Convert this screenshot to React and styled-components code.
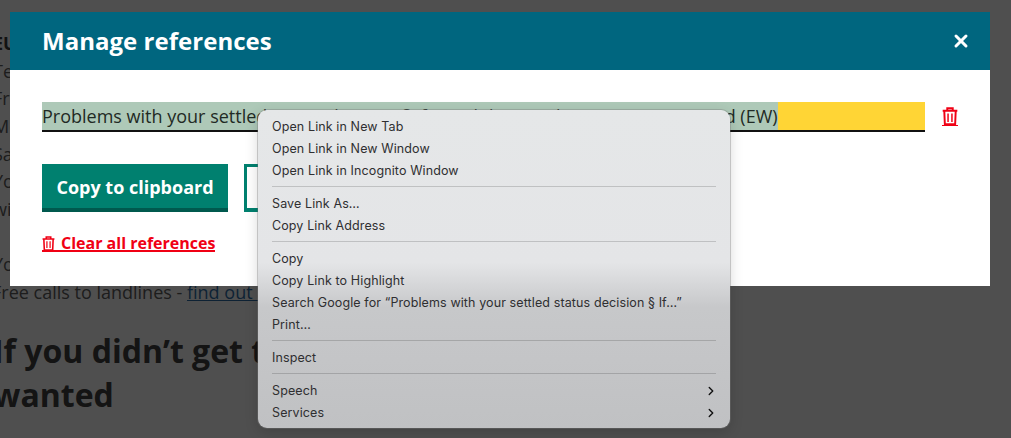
import React from "react";
import styled, { createGlobalStyle } from "styled-components";
import { ChevronRight, X } from "lucide-react";

const Global = createGlobalStyle`
  html, body { margin: 0; padding: 0; width: 1011px; height: 438px; overflow: hidden; background: #fff; }
  * { box-sizing: border-box; }
`;

const Page = styled.div`
  width: 1011px; height: 438px; overflow: hidden; position: relative;
  font-family: "Open Sans", sans-serif; background: #fff;
`;
const Article = styled.main`
  margin-top: -25px;
  font-size: 18px; line-height: 27.6px; color: #5e5e5e;
`;
const Para = styled.p`
  margin: 0 0 ${p => p.$gap || 0}px ${p => p.$indent || -7}px; white-space: nowrap;
`;
const Strong = styled.strong`font-weight: 700; color: #3c3c3c;`;
const PageLink = styled.a`color: #2f6fa8; text-decoration: underline;`;
const Heading = styled.h2`
  margin: 23px 0 0 -7px; font-size: 32px; line-height: 44px; font-weight: 700; color: #404040; white-space: nowrap;
`;
const Scrim = styled.div`
  position: absolute; inset: 0; background: rgba(0,0,0,.69);
`;
const Modal = styled.section`
  position: absolute; left: 10px; top: 12px; width: 980px; height: 274px; background: #fff;
  display: flex; flex-direction: column;
`;
const ModalHeader = styled.header`
  height: 58px; flex: none; background: #00667f; color: #fff;
  display: flex; align-items: center; justify-content: space-between;
  padding: 0 19px 0 32px;
`;
const ModalTitle = styled.h1`
  margin: 0; font-size: 24px; line-height: 32px; font-weight: 700; letter-spacing: .03px;
`;
const CloseIcon = styled(X)`display: block;`;
const ModalBody = styled.div`
  padding: 32px 32px 0; display: flex; flex-direction: column;
`;
const RefRow = styled.div`display: flex; align-items: flex-start; gap: 17px;`;
const RefField = styled.div`
  width: 883px; height: 30px; background: #ffd535; border-bottom: 2px solid #111; display: flex;
  font-size: 18px; line-height: 28px; color: #1f2a24; white-space: nowrap;
`;
const RefSelected = styled.span`
  width: 736px; background: #aec9b8; overflow: hidden; flex: none; height: 28px;
`;
const DeleteLink = styled.a`
  color: #f00014; display: block; height: 20px; margin-top: 4px; border-bottom: 1px solid #f00014; width: 16px;
  line-height: 0; padding-top: 1px;
`;
const Buttons = styled.div`display: flex; gap: 16px; margin-top: 32px;`;
const Primary = styled.button`
  width: 186px; height: 48px; border: 0; border-bottom: 4px solid #00594e; background: #00806f; color: #fff;
  font: 700 18px/24px "Open Sans", sans-serif; padding: 2px 0 0;
`;
const Secondary = styled.button`
  width: 186px; height: 48px; border: 3px solid #00806f; border-bottom-width: 4px; background: #fff; color: #00806f;
  font: 700 18px/24px "Open Sans", sans-serif; padding: 2px 0 0;
`;
const ClearLink = styled.a`
  margin-top: 22px; align-self: flex-start; color: #f00014; font-size: 16px; line-height: 14px; font-weight: 700;
  display: inline-flex; align-items: center; gap: 6px; white-space: nowrap;
  padding-top: 2px; border-bottom: 2px solid #f00014; height: 18px;
`;
const Menu = styled.nav`
  position: absolute; left: 258px; top: 110px; width: 472px; height: 318px; border-radius: 9px;
  padding: 5px 0;
  background: linear-gradient(180deg, #e5e7e8 0%, #e4e5e7 48%, #c7c8ca 62%, #c0c1c3 100%);
  box-shadow: 0 0 0 1px rgba(120,120,120,.35), 0 4px 14px rgba(0,0,0,.16);
  font-family: Inter, "Liberation Sans", sans-serif; font-size: 12.5px; letter-spacing: .11px; color: #2f2f31;
`;
const MenuItem = styled.div`
  height: 22px; padding: 1px 14px 0; display: flex; align-items: center; justify-content: space-between;
  white-space: nowrap;
`;
const MenuRule = styled.hr`
  margin: 5px 14px; border: 0; border-top: 1px solid rgba(0,0,0,.16); height: 1px;
`;
const Arrow = styled(ChevronRight)`display: block; margin-right: -2px; color: #111;`;

const Trash = ({ size = 16 }) => (
  <svg width={size} height={size * 1.15} viewBox="0 0 14 16" fill="none" stroke="currentColor" strokeWidth="1.7">
    <path d="M0.6 3.2h12.8M4.6 3V1h4.8v2M2 3.4l.5 11.7h9l.5-11.7" />
    <path d="M5.3 5.6v7.4M8.7 5.6v7.4" strokeWidth="1.3" />
  </svg>
);

const groups = [
  ["Open Link in New Tab", "Open Link in New Window", "Open Link in Incognito Window"],
  ["Save Link As…", "Copy Link Address"],
  ["Copy", "Copy Link to Highlight", "Search Google for “Problems with your settled status decision § If…”", "Print…"],
  ["Inspect"],
];

export default function App() {
  return (
    <Page>
      <Global />
      <Article>
        <Para $gap={27.6}>Bring them your application</Para>
        <Para><Strong>EU Settlement Resolution Centre</Strong></Para>
        <Para>Telephone: 0300 123 7379</Para>
        <Para>From outside the UK: +44 203 080 0010</Para>
        <Para>Monday to Friday, 8am to 8pm</Para>
        <Para>Saturday and Sunday, 9:30am to 4:30pm</Para>
        <Para>You can also ask a question</Para>
        <Para $gap={27.6}>with an online form</Para>
        <Para>You might be charged for calls</Para>
        <Para $indent={-8}>Free calls to landlines - <PageLink>find out about call charges</PageLink></Para>
        <Heading>If you didn’t get the status you<br />wanted</Heading>
      </Article>
      <Scrim />
      <Modal>
        <ModalHeader>
          <ModalTitle>Manage references</ModalTitle>
          <CloseIcon size={20} strokeWidth={3.6} />
        </ModalHeader>
        <ModalBody>
          <RefRow>
            <RefField>
              <RefSelected>Problems with your settled status decision § If you didn’t get the status you wanted (EW)</RefSelected>
            </RefField>
            <DeleteLink><Trash /></DeleteLink>
          </RefRow>
          <Buttons>
            <Primary>Copy to clipboard</Primary>
            <Secondary>Close</Secondary>
          </Buttons>
          <ClearLink><Trash size={13} />Clear all references</ClearLink>
        </ModalBody>
      </Modal>
      <Menu>
        {groups.map(g => (
          <React.Fragment key={g[0]}>
            {g.map(t => <MenuItem key={t}>{t}</MenuItem>)}
            <MenuRule />
          </React.Fragment>
        ))}
        <MenuItem>Speech<Arrow size={14} strokeWidth={2.4} /></MenuItem>
        <MenuItem>Services<Arrow size={14} strokeWidth={2.4} /></MenuItem>
      </Menu>
    </Page>
  );
}
